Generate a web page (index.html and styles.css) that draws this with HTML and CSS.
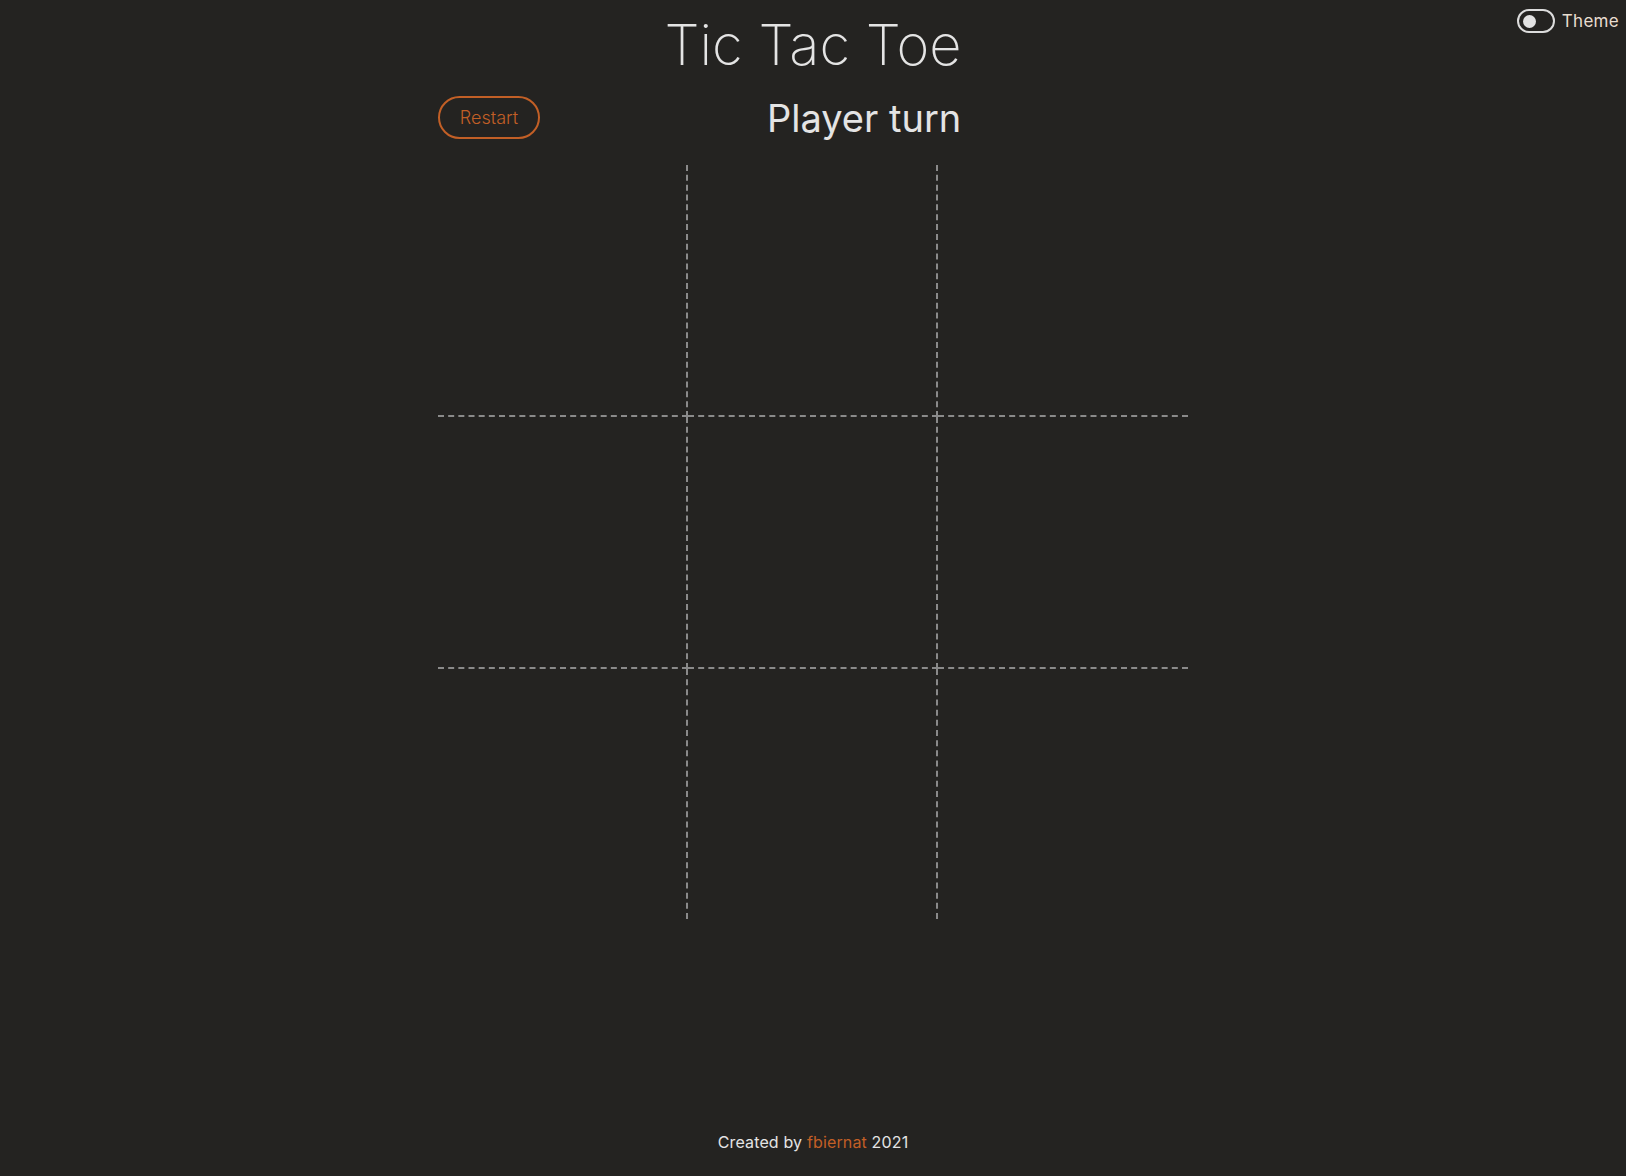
FILE: index.html
```html
<!DOCTYPE html>
<html lang="en">
<head>
<meta charset="utf-8">
<title>Tic Tac Toe</title>
<link rel="stylesheet" href="styles.css">
</head>
<body>
<div class="page">
  <label class="theme-switch">
    <span class="switch"><span class="knob"></span></span>
    <span class="switch-label">Theme</span>
  </label>
  <main class="game">
    <h1 class="title">Tic Tac Toe</h1>
    <div class="status-bar">
      <button class="restart">Restart</button>
      <h2 class="turn">Player turn</h2>
    </div>
    <div class="board">
      <div class="cell c-r c-b"></div>
      <div class="cell c-r c-b"></div>
      <div class="cell c-b"></div>
      <div class="cell c-r c-b"></div>
      <div class="cell c-r c-b"></div>
      <div class="cell c-b"></div>
      <div class="cell c-r"></div>
      <div class="cell c-r"></div>
      <div class="cell"></div>
    </div>
  </main>
  <footer class="footer">Created by <a class="author" href="#">fbiernat</a> 2021</footer>
</div>
</body>
</html>
```

FILE: styles.css
```css
* { box-sizing: border-box; }
html, body { margin: 0; padding: 0; }
body {
  background: #242321;
  color: #e6e6e6;
  font-family: Inter, "Noto Sans", sans-serif;
}
.page {
  min-height: 100vh;
  display: flex;
  flex-direction: column;
  align-items: center;
  position: relative;
}
.theme-switch {
  position: absolute;
  top: 9px;
  right: 7px;
  display: flex;
  align-items: center;
  gap: 7px;
  cursor: pointer;
}
.switch {
  width: 38px;
  height: 24px;
  border: 2px solid #dcdcdc;
  border-radius: 12px;
  display: flex;
  align-items: center;
  padding-left: 4px;
}
.knob {
  width: 13px;
  height: 13px;
  border-radius: 50%;
  background: #e2e2e2;
}
.switch-label {
  font-size: 17px;
  letter-spacing: 0.3px;
  font-weight: 400;
  color: #e8ddd0;
}
.game {
  display: flex;
  flex-direction: column;
  align-items: center;
}
.title {
  margin: 16px 0 0;
  font-size: 56px;
  line-height: 58px;
  font-weight: 200;
  color: #e4e4e4;
}
.status-bar {
  width: 750px;
  display: flex;
  align-items: center;
  margin-top: 22px;
  height: 43px;
}
.restart {
  width: 102px;
  height: 43px;
  border: 2px solid #c25f26;
  border-radius: 22px;
  background: transparent;
  color: #c25f26;
  font-family: inherit;
  font-size: 18px;
  font-weight: 300;
  padding: 0;
}
.turn {
  margin: 2px 0 0 227px;
  font-size: 38px;
  line-height: 43px;
  font-weight: 400;
  color: #e4e4e4;
}
.board {
  margin-top: 26px;
  display: grid;
  grid-template-columns: 250px 250px 250px;
  grid-template-rows: 252px 252px 250px;
}
.cell.c-r { border-right: 2px dashed #8a8a8a; }
.cell.c-b { border-bottom: 2px dashed #8a8a8a; }
.footer {
  margin-top: auto;
  padding-bottom: 24px;
  font-size: 16px;
  letter-spacing: 0.15px;
  color: #e4e4e4;
}
.author {
  color: #c25f26;
  text-decoration: none;
}
```
